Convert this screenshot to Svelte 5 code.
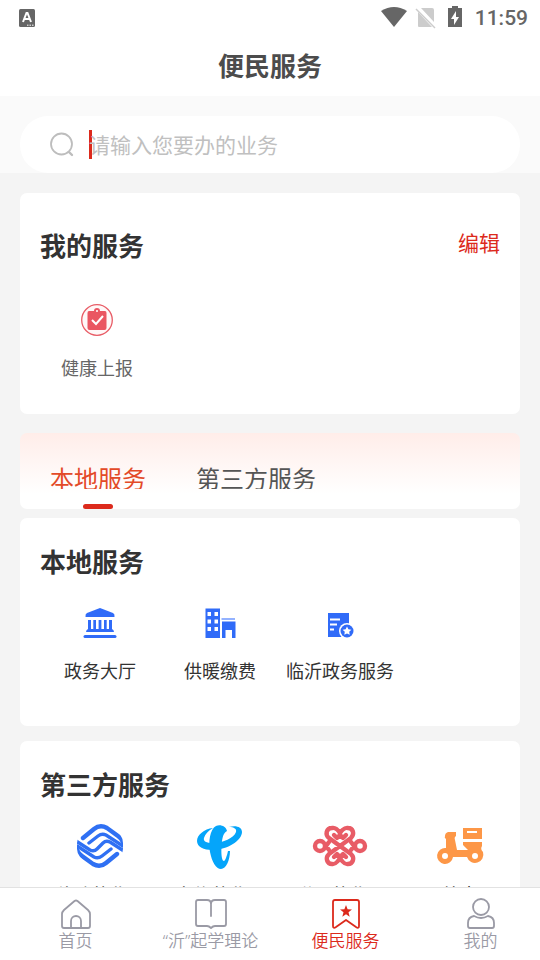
<script lang="ts">
	interface Service {
		icon: string;
		label: string;
	}

	const local: Service[] = [
		{ icon: 'hall', label: '政务大厅' },
		{ icon: 'heating', label: '供暖缴费' },
		{ icon: 'document', label: '临沂政务服务' }
	];
	const thirdParty: Service[] = [
		{ icon: 'mobile', label: '移动营业厅' },
		{ icon: 'telecom', label: '电信营业厅' },
		{ icon: 'unicom', label: '联通营业厅' },
		{ icon: 'scooter', label: '外卖' }
	];
	const nav: Service[] = [
		{ icon: 'home', label: '首页' },
		{ icon: 'book', label: '“沂”起学理论' },
		{ icon: 'bookmark', label: '便民服务' },
		{ icon: 'user', label: '我的' }
	];
	const tabs = ['本地服务', '第三方服务'];

	let activeTab = $state(0);
	let activeNav = $state(2);
	let query = $state('');
</script>

{#snippet icon(name: string)}
	<svg class="icon" viewBox="0 0 48 48" aria-hidden="true">
		{#if name === 'report'}
			<circle cx="24" cy="24" r="15.3" fill="#fff8f8" stroke="#e85c66" stroke-width="1.3" />
			<path fill="#ea5662" d="M16 15h5a3 3 0 0 1 6 0h5q1.500 0 1.500 2v15q0 2-2 2h-15q-2 0-2-2V17q0-2 1.500-2z" />
			<circle cx="24" cy="15" r="1" fill="#fff" />
			<path fill="none" stroke="#fff" stroke-width="2" d="m19 24 4 4 7-8" />
		{:else if name === 'hall'}
			<g fill="#306bf8">
				<path d="m24 7 13 5q2 1 1.500 4h-29Q9 13 11 12z" />
				<path d="M12 19h3v9h2.300v-9h2.700v9h2.600v-9h2.800v9H28v-9h2.700v9H33v-9h3v9q2 1 2 3H10q0-2 2-3z" />
				<rect x="7.500" y="34" width="33" height="3" rx="1.500" />
			</g>
		{:else if name === 'heating'}
			<path fill="#306bf8" fill-rule="evenodd" d="M9.500 7.500H24V37H9.500zM11.500 11v4h3.500v-4zm7 0v4H22v-4zm-7 7.500v4h3.500v-4zm7 0v4H22v-4zm-7 7.500v4h3.500v-4zm7 0v4H22v-4z" />
			<path fill="#93b2ff" d="M25.500 17H39v2H25.500z" />
			<path fill="#306bf8" d="M26 20.500h13.500V37H36v-8h-6.500v8H26z" />
		{:else if name === 'document'}
			<path fill="#306bf8" d="M12 12h21v24H12z" />
			<path stroke="#fff" stroke-width="2" d="M14 18.500h10M14 23.500h7M14 28.500h4" />
			<circle cx="31" cy="30" r="8" fill="#fff" />
			<circle cx="31" cy="30" r="6.500" fill="#306bf8" />
			<path fill="#fff" d="m31 25.500 1.400 2.700 3 .5-2.200 2.100.5 3-2.700-1.400-2.700 1.400.5-3-2.200-2.100 3-.5z" />
		{:else if name === 'mobile'}
			<clipPath id="mobile-outline">
				<path d="M24 1q6 0 11 4 12 7 12 16v6q0 8-12 16-5 4-11 4t-11-4Q1 35 1 27v-6Q1 13 13 5q5-4 11-4z" />
			</clipPath>
			<g fill="none" stroke="#2f70f3" stroke-linecap="round" clip-path="url(#mobile-outline)">
				<path stroke-width="4.400" d="M7 16 18 7q6-5 13-1l11 8q4 3 5 6M41 32 30 41q-6 5-13 1L6 34q-4-3-5-6" />
				<path stroke-width="3.400" d="m13 21 9-7q4-3 8-1l17 11M35 27l-9 7q-4 3-8 1L1 24" />
				<path stroke-width="3.400" d="m0 19 14 9q4 2 7-1l6-6q3-3 7-1l14 9" />
			</g>
		{:else if name === 'telecom'}
			<g fill="#05a5fa">
				<path d="M17 6C8 7 1 13 1 19c0 6 7 9 15 9 16 0 30-10 30-18 0-5-6-7-13-5 5 0 8 2 7 5-2 6-13 11-23 11-7 0-10-2-9-5 1-4 4-7 9-10z" />
				<path d="M31 9c-1-5-7-7-11-5-6 3-8 16-6 26 2 10 6 17 11 17s9-9 9-18h-2c-1 5-3 10-4 10-3 0-3-13-2-20 1-6 2-8 5-10z" />
			</g>
		{:else if name === 'unicom'}
			<g fill="none" stroke="#e85c66" stroke-width="4.400" stroke-linecap="round" stroke-linejoin="round">
				<path d="M24 11q-4-6-8-5c-6 0-7 7-3 10l22 16c4 4 2 10-3 10-4 1-8-6-8-6s-4 7-8 6c-5 0-7-6-3-10l22-16c4-4 2-10-3-10-4-1-8 5-8 5z" />
				<path d="m18 13 3 3 3-3 3 3 3-3M18 35l3-3 3 3 3-3 3 3M13 20l-3 4 3 4M35 20l3 4-3 4" />
				<circle cx="4" cy="24" r="5" />
				<circle cx="44" cy="24" r="5" />
			</g>
		{:else if name === 'scooter'}
			<g fill="#fd9747">
				<path d="M12 10h8v4q-2 1-1 4l2 10h11l-5-5v-3h19v4q-2 3 1 6a8 8 0 1 1-16 5H17A8 8 0 1 1 10 26V17q-2-1-1-3 0-3 3-4z" />
				<path d="M27 6h19v11H27z" />
			</g>
			<path stroke="#fff" stroke-width="2" d="M31 10h10" />
			<circle cx="9" cy="34" r="3" fill="#fff" />
			<circle cx="39" cy="34" r="3" fill="#fff" />
		{/if}
	</svg>
{/snippet}

{#snippet navIcon(name: string)}
	<svg class="nav-icon" viewBox="0 0 34 34" aria-hidden="true">
		<g fill="none" stroke="currentColor" stroke-width="1.800" stroke-linejoin="round" stroke-linecap="round">
			{#if name === 'home'}
				<path d="m5 13 10.500-9q1.500-1 3 0L29 13q2 2 2 4v12q0 2-2 2H5q-2 0-2-2V17q0-2 2-4z" />
				<path d="M12 31v-7a5 5 0 0 1 10 0v7" />
			{:else if name === 'book'}
				<path d="M17 19V7q0-4-4-4H4Q2 3 2 5v22q0 2 2 2h9q2 0 4 2 2-2 4-2h9q2 0 2-2V5q0-2-2-2h-9q-4 0-4 4" />
			{:else if name === 'bookmark'}
				<path d="M6 3h22q2 0 2 2v24q0 3-3 1l-10-7-10 7q-3 2-3-1V5q0-2 2-2z" />
				<path fill="currentColor" stroke="none" d="m17 8 1.600 4.300 4.400.2-3.500 2.800 1.200 4.400-3.700-2.500-3.700 2.500 1.200-4.400-3.500-2.800 4.400-.2z" />
			{:else}
				<circle cx="17" cy="10" r="8" />
				<path d="M10 19q7 4 14 0 6 1 6 7v3q0 2-2 2H6q-2 0-2-2v-3q0-6 6-7z" />
			{/if}
		</g>
	</svg>
{/snippet}

<div class="app">
	<header>
		<div class="status">
			<svg class="ime" viewBox="0 0 18 20" aria-hidden="true">
				<rect x="1" y="1" width="16" height="18" rx="1.500" fill="#666" />
				<path fill="none" stroke="#fff" stroke-width="2" d="m5 14 3.500-9h1L13 14M6.500 11h5" />
				<path stroke="#fff" stroke-width="1" stroke-dasharray="1.500 1" d="M9 17.200h7" />
			</svg>
			<svg class="signals" viewBox="0 0 84 24" aria-hidden="true">
				<path fill="#666" d="M0 5q13-8 26 0L13 21z" />
				<path fill="#ccc" d="m40 2 13 14V4q0-2-2-2H41zM37 6v14q0 1 1 1h13z" />
				<path stroke="#ccc" stroke-width="1.500" d="m35 3 19 19" />
				<path fill="#666" d="M71 0h6v2h4v19H67V2h4z" />
				<path fill="#fff" d="m75 5-5 8h3v6l5-8h-3z" />
			</svg>
			<time>11:59</time>
		</div>
		<h1>便民服务</h1>
	</header>

	<main>
		<form class="search-band">
			<label class="search">
				<svg class="search-icon" viewBox="0 0 26 26" aria-hidden="true">
					<circle cx="12.500" cy="12" r="10.500" fill="none" stroke="#bdbdbd" stroke-width="1.800" />
					<path stroke="#bdbdbd" stroke-width="2.400" stroke-linecap="round" d="m20 20 3 3" />
				</svg>
				<span class="caret"></span>
				<input type="text" bind:value={query} placeholder="请输入您要办的业务" aria-label="搜索业务" />
			</label>
		</form>

		<div class="content">
			<section class="card mine">
				<div class="card-head">
					<h2>我的服务</h2>
					<button type="button" class="edit">编辑</button>
				</div>
				<button type="button" class="service">
					{@render icon('report')}
					<span>健康上报</span>
				</button>
			</section>

			<div class="tabs" role="tablist">
				{#each tabs as tab, i (tab)}
					<button type="button" role="tab" class="tab" aria-selected={activeTab === i} onclick={() => (activeTab = i)}>
						<span>{tab}</span>
					</button>
				{/each}
			</div>

			<section class="card local">
				<h2>本地服务</h2>
				<div class="grid">
					{#each local as item (item.label)}
						<button type="button" class="service">
							{@render icon(item.icon)}
							<span>{item.label}</span>
						</button>
					{/each}
				</div>
			</section>

			<section class="card third">
				<h2>第三方服务</h2>
				<div class="grid">
					{#each thirdParty as item (item.label)}
						<button type="button" class="service">
							{@render icon(item.icon)}
							<span>{item.label}</span>
						</button>
					{/each}
				</div>
			</section>
		</div>
	</main>

	<nav>
		{#each nav as item, i (item.label)}
			<button type="button" class:active={activeNav === i} onclick={() => (activeNav = i)}>
				{@render navIcon(item.icon)}
				<span>{item.label}</span>
			</button>
		{/each}
	</nav>
</div>

<style>
	:global(body) {
		margin: 0;
		background: #f4f4f4;
	}
	.app {
		display: flex;
		flex-direction: column;
		height: 100vh;
		overflow: hidden;
		font-family: Roboto, 'Noto Sans CJK SC', sans-serif;
		color: #333;
	}
	button {
		padding: 0;
		border: 0;
		background: none;
		font: inherit;
		color: inherit;
	}
	h1,
	h2 {
		margin: 0;
		font-size: 26px;
		line-height: 36px;
		font-weight: 700;
	}
	header {
		flex: none;
		background: #fff;
		padding-bottom: 11px;
	}
	.status {
		display: flex;
		align-items: center;
		height: 36px;
		padding: 0 12px 0 18px;
		color: #666;
		font-size: 21px;
		font-weight: 500;
	}
	.ime {
		width: 18px;
		height: 20px;
	}
	.signals {
		width: 84px;
		height: 24px;
		margin: 0 10px 0 auto;
	}
	h1 {
		margin-top: 13px;
		text-align: center;
		color: #4c4c4c;
	}
	main {
		flex: 1;
		min-height: 0;
		overflow: hidden;
	}
	.search-band {
		padding: 20px 20px 0;
		background: #fafafa;
	}
	.search {
		display: flex;
		align-items: center;
		height: 57px;
		padding: 0 29px;
		border-radius: 28px;
		background: #fff;
	}
	.search-icon {
		width: 26px;
		height: 26px;
	}
	.caret {
		width: 3px;
		height: 29px;
		margin: 0 -3px 0 14px;
		background: #dc2a1c;
	}
	.search input {
		flex: 1;
		min-width: 0;
		padding: 0 0 2px;
		border: 0;
		outline: 0;
		background: none;
		font: 21px/30px 'Noto Sans CJK SC', sans-serif;
	}
	.search input::placeholder {
		color: #c0c0c0;
	}
	.content {
		padding: 20px;
	}
	.card {
		padding: 0 20px;
		border-radius: 7px;
		background: #fff;
	}
	.mine {
		padding-top: 36px;
		padding-bottom: 31px;
	}
	.card-head {
		display: flex;
		justify-content: space-between;
		align-items: flex-start;
		margin-bottom: 31px;
	}
	.edit {
		font-size: 21px;
		line-height: 30px;
		color: #dc2a1c;
	}
	.service {
		display: flex;
		flex-direction: column;
		align-items: center;
		gap: 11px;
		width: 120px;
		font-size: 18px;
		line-height: 28px;
		white-space: nowrap;
	}
	.mine .service {
		width: 114px;
		color: #666;
	}
	.icon {
		width: 48px;
		height: 48px;
		overflow: visible;
	}
	.tabs {
		display: flex;
		gap: 50px;
		margin-top: 19px;
		padding: 31px 30px 0;
		border-radius: 7px;
		background: linear-gradient(#ffede9, #fff 80%);
	}
	.tab {
		display: flex;
		flex-direction: column;
		align-items: center;
		gap: 15px;
		font-size: 24px;
		line-height: 32px;
		color: #555;
	}
	.tab span {
		height: 25px;
		overflow: hidden;
	}
	.tab::after {
		content: '';
		width: 30px;
		height: 5px;
		border-radius: 3px;
	}
	.tab[aria-selected='true'] {
		color: #e34a28;
	}
	.tab[aria-selected='true']::after {
		background: #dc2a1c;
	}
	.local {
		margin-top: 9px;
		padding-top: 27px;
		padding-bottom: 40px;
	}
	.local .service {
		gap: 9px;
	}
	.third {
		margin-top: 15px;
		padding-top: 27px;
		padding-bottom: 40px;
	}
	.third .service {
		gap: 12px;
	}
	.grid {
		display: grid;
		grid-template-columns: repeat(4, 120px);
		margin: 20px -20px 0 0;
	}
	.third .grid {
		margin-top: 18px;
	}
	nav {
		flex: none;
		display: grid;
		grid-template-columns: repeat(4, 25vw);
		height: 72px;
		padding-left: 8px;
		border-top: 1px solid #e2e2e2;
		background: #fff;
	}
	nav button {
		display: flex;
		flex-direction: column;
		align-items: center;
		padding-top: 9px;
		font-family: 'Noto Sans', 'Noto Sans CJK SC', sans-serif;
		font-size: 17px;
		line-height: 20px;
		font-weight: 350;
		color: #9a9aa5;
	}
	nav button.active {
		color: #dc2a1c;
	}
	.nav-icon {
		width: 34px;
		height: 34px;
	}
</style>
